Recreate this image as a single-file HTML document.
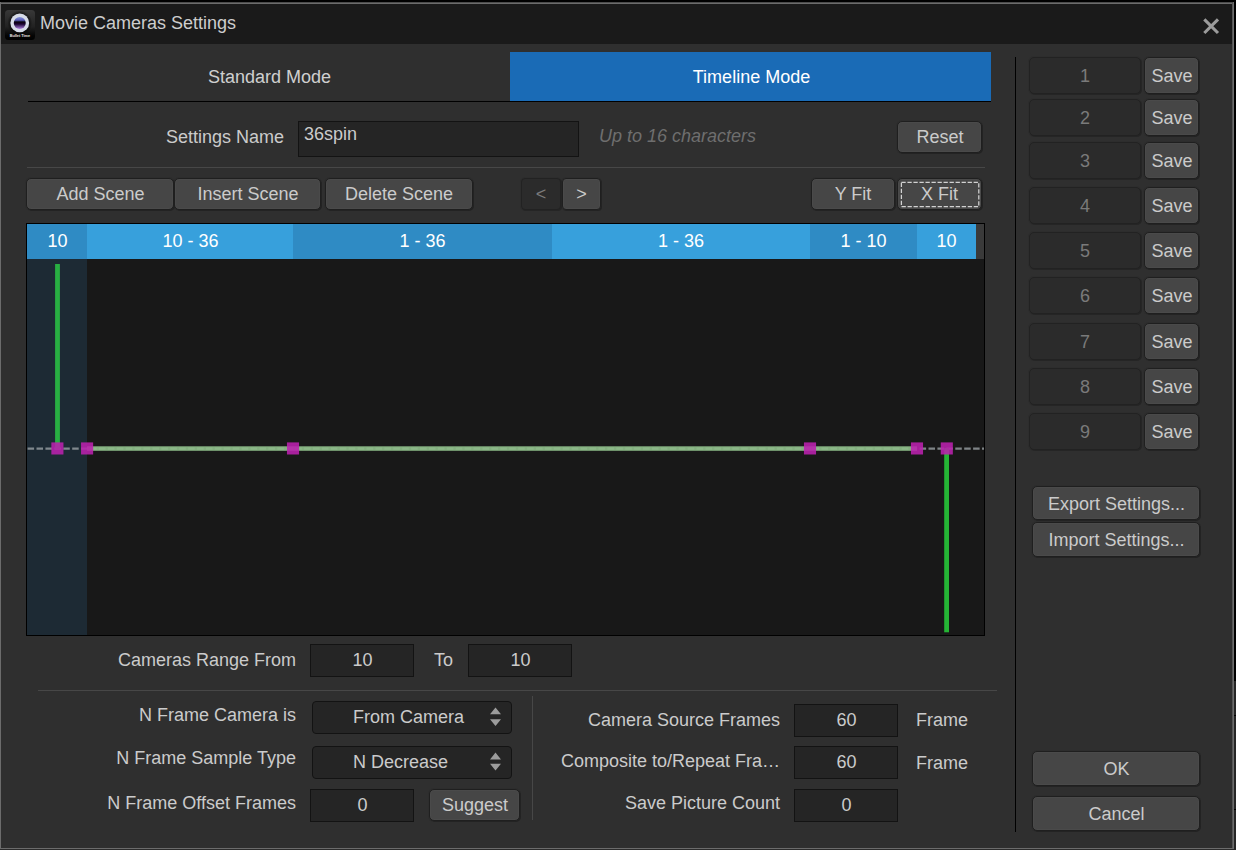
<!DOCTYPE html>
<html><head><meta charset="utf-8"><title>Movie Cameras Settings</title>
<style>
*{box-sizing:border-box;margin:0;padding:0}
html,body{width:1236px;height:850px;overflow:hidden;background:#000}
body{position:relative;font-family:"Liberation Sans",sans-serif;font-size:18px;color:#cbcbcb}
.a{position:absolute}
.t{position:absolute;white-space:nowrap;line-height:20px;height:20px}
.c{text-align:center}
.r{text-align:right}
.btn{position:absolute;background:#464646;border:1px solid #1f1f1f;border-radius:5px;text-align:center;color:#cbcbcb;box-shadow:1px 1px 0 0 rgba(32,32,32,.8),0 0 0 1px rgba(32,32,32,.15),inset 0 0 0 1px rgba(255,255,255,.025)}
.slot{position:absolute;background:#2b2b2b;border:1px solid #222;border-radius:5px;text-align:center;color:#7a7a7a;box-shadow:1px 1px 0 0 rgba(34,34,34,.7),0 0 0 1px rgba(32,32,32,.12)}
.inp{position:absolute;background:#252525;border:1px solid #131313;text-align:center;color:#cbcbcb;padding-left:1px}
.hl{position:absolute;height:1px;background:#474747}
.seg{position:absolute;top:224px;height:35px;color:#fff;text-align:center;line-height:34px}
.mk{position:absolute;width:12px;height:12px;background:rgba(187,33,174,.88);top:442.5px}
</style></head><body>
<!-- window frame -->
<div class="a" style="left:0;top:2px;width:1234px;height:847px;background:#6c6c6c"></div>
<div class="a" style="left:1px;top:2px;width:1232px;height:1px;background:#4c4c4c"></div>
<div class="a" style="left:1232px;top:3px;width:1px;height:845px;background:#565656"></div>
<div class="a" style="left:0;top:849px;width:1236px;height:1px;background:#2c2c2c"></div>
<div class="a" style="left:1234px;top:681px;width:2px;height:169px;background:#262626"></div>
<div class="a" style="left:1234px;top:715px;width:2px;height:1px;background:#000"></div>
<div class="a" style="left:1234px;top:809px;width:2px;height:1px;background:#000"></div>
<div class="a" style="left:1px;top:4px;width:1231px;height:40px;background:#1a1a1a"></div>
<div class="a" style="left:1px;top:44px;width:1231px;height:804px;background:#2f2f2f"></div>

<!-- title -->
<svg class="a" style="left:5px;top:10px" width="30" height="30" viewBox="0 0 30 30">
<defs>
<linearGradient id="ig" x1="0" y1="0" x2="0" y2="1"><stop offset="0" stop-color="#383838"/><stop offset="0.55" stop-color="#222"/><stop offset="0.85" stop-color="#050505"/><stop offset="1" stop-color="#000"/></linearGradient>
<linearGradient id="lg2" x1="0" y1="0" x2="0" y2="1"><stop offset="0" stop-color="#8796dc"/><stop offset="0.28" stop-color="#5a5cb6"/><stop offset="0.42" stop-color="#07020c"/><stop offset="0.6" stop-color="#1a0732"/><stop offset="1" stop-color="#ae7ee0"/></linearGradient>
<radialGradient id="sh" cx="0.5" cy="0.5" r="0.5"><stop offset="0.75" stop-color="#000" stop-opacity=".55"/><stop offset="1" stop-color="#000" stop-opacity="0"/></radialGradient>
<filter id="bl" x="-20%" y="-20%" width="140%" height="140%"><feGaussianBlur stdDeviation="0.45"/></filter>
</defs>
<rect x="0" y="0" width="30" height="30" rx="3.5" fill="url(#ig)"/>
<circle cx="14.75" cy="13" r="12.5" fill="url(#sh)"/>
<g filter="url(#bl)">
<circle cx="14.75" cy="12.9" r="9.4" fill="#d7dce8"/>
<circle cx="14.75" cy="12.9" r="6" fill="url(#lg2)"/>
</g>
<text x="14.9" y="26.9" textLength="20.4" lengthAdjust="spacingAndGlyphs" style="font-family:'Liberation Sans',sans-serif;font-size:4.3px;font-weight:bold" fill="#e6e6e6" text-anchor="middle">Bullet Time</text>
</svg>
<div class="t" style="left:40px;top:13px;color:#cdcdcd">Movie Cameras Settings</div>
<svg class="a" style="left:1201px;top:16px" width="20" height="20" viewBox="0 0 20 20"><path d="M3.3 3.3 L17 17 M17 3.3 L3.3 17" stroke="#9b9b9b" stroke-width="3.1" fill="none"/></svg>

<!-- tabs -->
<div class="a" style="left:510px;top:52px;width:481px;height:49px;background:#1a6bb6"></div>
<div class="a" style="left:28px;top:101px;width:963px;height:1px;background:#000"></div>
<div class="t c" style="left:28px;top:67px;width:483px;color:#cfcfcf">Standard Mode</div>
<div class="t c" style="left:511px;top:67px;width:481px;color:#fff">Timeline Mode</div>

<!-- settings name -->
<div class="t r" style="left:100px;top:127px;width:184px">Settings Name</div>
<div class="inp" style="left:298px;top:121px;width:281px;height:36px;text-align:left"><span class="t" style="left:5px;top:2px">36spin</span></div>
<div class="t" style="left:599px;top:126px;color:#6e6e6e;font-style:italic">Up to 16 characters</div>
<div class="btn" style="left:897px;top:121px;width:85px;height:32px;line-height:30px;padding-left:1px">Reset</div>
<div class="hl" style="left:27px;top:167px;width:958px"></div>

<!-- scene buttons -->
<div class="btn" style="left:26px;top:178px;width:148px;height:32px;line-height:30px;padding-left:1px">Add Scene</div>
<div class="btn" style="left:174px;top:178px;width:147px;height:32px;line-height:30px;padding-left:1px">Insert Scene</div>
<div class="btn" style="left:325px;top:178px;width:148px;height:32px;line-height:30px">Delete Scene</div>
<div class="slot" style="left:521px;top:178px;width:40px;height:32px;line-height:30px;border-radius:4px">&lt;</div>
<div class="btn" style="left:562px;top:178px;width:39px;height:32px;line-height:30px;border-radius:4px">&gt;</div>
<div class="btn" style="left:811px;top:178px;width:84px;height:32px;line-height:30px">Y Fit</div>
<div class="btn" style="left:897px;top:178px;width:85px;height:32px;line-height:30px">X Fit</div>
<svg class="a" style="left:897px;top:178px" width="86" height="33" viewBox="0 0 86 33"><rect x="4.4" y="4.4" width="77.4" height="24.2" fill="none" stroke="#d2d2d2" stroke-width="1.25" stroke-dasharray="4.3 1.72"/></svg>

<!-- timeline -->
<div class="a" style="left:26px;top:223px;width:959px;height:413px;background:#000"></div>
<div class="a" style="left:27px;top:224px;width:957px;height:411px;background:#181818"></div>
<div class="a" style="left:27px;top:259px;width:60px;height:376px;background:#1d2a34"></div>
<div class="seg" style="left:27px;width:60px;background:#2f8bc4;padding-left:1px">10</div>
<div class="seg" style="left:87px;width:206px;background:#37a0dc;padding-left:1px">10 - 36</div>
<div class="seg" style="left:293px;width:259px;background:#2f8bc4">1 - 36</div>
<div class="seg" style="left:552px;width:258px;background:#37a0dc">1 - 36</div>
<div class="seg" style="left:810px;width:107px;background:#2f8bc4">1 - 10</div>
<div class="seg" style="left:917px;width:59px;background:#37a0dc">10</div>
<div class="seg" style="left:976px;width:8px;background:#3a3a3a"></div>
<svg class="a" style="left:27px;top:259px" width="957" height="376" viewBox="27 259 957 376">
<line x1="27.6" y1="448.65" x2="984" y2="448.65" stroke="#9aa0a4" stroke-opacity=".8" stroke-width="2.2" stroke-dasharray="6.5 2.42"/>
<rect x="87" y="446.3" width="830" height="4.5" fill="#8cbb88" fill-opacity=".93"/>
<rect x="55.1" y="264" width="4.8" height="185" fill="#28ae42"/>
<rect x="944.2" y="448" width="4.8" height="184.3" fill="#25b435"/>
<rect x="51.35" y="442.4" width="12.1" height="12.1" fill="#bb21ae" fill-opacity=".88"/>
<rect x="81.05" y="442.4" width="12.1" height="12.1" fill="#bb21ae" fill-opacity=".88"/>
<rect x="286.95" y="442.4" width="12.1" height="12.1" fill="#bb21ae" fill-opacity=".88"/>
<rect x="803.95" y="442.4" width="12.1" height="12.1" fill="#bb21ae" fill-opacity=".88"/>
<rect x="910.95" y="442.4" width="12.1" height="12.1" fill="#bb21ae" fill-opacity=".88"/>
<rect x="940.75" y="442.4" width="12.1" height="12.1" fill="#bb21ae" fill-opacity=".88"/>
</svg>

<!-- cameras range -->
<div class="t r" style="left:60px;top:650px;width:236px">Cameras Range From</div>
<div class="inp" style="left:310px;top:644px;width:104px;height:33px;line-height:31px">10</div>
<div class="t" style="left:434px;top:650px">To</div>
<div class="inp" style="left:468px;top:644px;width:104px;height:33px;line-height:31px">10</div>
<div class="hl" style="left:38px;top:690px;width:959px"></div>

<!-- bottom left -->
<div class="t r" style="left:60px;top:705px;width:236px">N Frame Camera is</div>
<div class="t r" style="left:60px;top:748px;width:236px">N Frame Sample Type</div>
<div class="t r" style="left:60px;top:793px;width:236px">N Frame Offset Frames</div>
<div class="inp" style="left:312px;top:701px;width:200px;height:33px;border-radius:4px;line-height:31px;text-align:left;padding-left:40px">From Camera</div>
<div class="inp" style="left:312px;top:746px;width:200px;height:33px;border-radius:4px;line-height:31px;text-align:left;padding-left:40px">N Decrease</div>
<svg class="a" style="left:488px;top:705px" width="16" height="24" viewBox="0 0 16 24"><path d="M2 9.3 L7.5 2.5 L13 9.3 Z M2 14.2 L7.5 21 L13 14.2 Z" fill="#9c9c9c"/></svg>
<svg class="a" style="left:488px;top:750px" width="16" height="24" viewBox="0 0 16 24"><path d="M2 9.4 L7.5 2.6 L13 9.4 Z M2 13.8 L7.5 20.6 L13 13.8 Z" fill="#9c9c9c"/></svg>
<div class="inp" style="left:310px;top:789px;width:104px;height:33px;line-height:31px">0</div>
<div class="btn" style="left:429px;top:789px;width:91px;height:32px;line-height:31px;padding-left:1px">Suggest</div>
<div class="a" style="left:532px;top:696px;width:1px;height:124px;background:#474747"></div>

<!-- bottom right -->
<div class="t r" style="left:540px;top:710px;width:240px">Camera Source Frames</div>
<div class="t r" style="left:540px;top:751px;width:240px">Composite to/Repeat Fra…</div>
<div class="t r" style="left:540px;top:793px;width:240px">Save Picture Count</div>
<div class="inp" style="left:794px;top:704px;width:104px;height:33px;line-height:31px">60</div>
<div class="inp" style="left:794px;top:746px;width:104px;height:33px;line-height:31px">60</div>
<div class="inp" style="left:794px;top:789px;width:104px;height:33px;line-height:31px">0</div>
<div class="t" style="left:916px;top:710px">Frame</div>
<div class="t" style="left:916px;top:753px">Frame</div>

<!-- right column -->
<div class="a" style="left:1015px;top:57px;width:1px;height:775px;background:#000"></div>
<div class="slot" style="left:1029px;top:57px;width:112px;height:37px;line-height:37px">1</div>
<div class="btn" style="left:1144px;top:57px;width:55px;height:37px;line-height:37px;padding-left:1px">Save</div>
<div class="slot" style="left:1029px;top:99px;width:112px;height:37px;line-height:37px">2</div>
<div class="btn" style="left:1144px;top:99px;width:55px;height:37px;line-height:37px;padding-left:1px">Save</div>
<div class="slot" style="left:1029px;top:142px;width:112px;height:37px;line-height:37px">3</div>
<div class="btn" style="left:1144px;top:142px;width:55px;height:37px;line-height:37px;padding-left:1px">Save</div>
<div class="slot" style="left:1029px;top:187px;width:112px;height:37px;line-height:37px">4</div>
<div class="btn" style="left:1144px;top:187px;width:55px;height:37px;line-height:37px;padding-left:1px">Save</div>
<div class="slot" style="left:1029px;top:232px;width:112px;height:37px;line-height:37px">5</div>
<div class="btn" style="left:1144px;top:232px;width:55px;height:37px;line-height:37px;padding-left:1px">Save</div>
<div class="slot" style="left:1029px;top:277px;width:112px;height:37px;line-height:37px">6</div>
<div class="btn" style="left:1144px;top:277px;width:55px;height:37px;line-height:37px;padding-left:1px">Save</div>
<div class="slot" style="left:1029px;top:323px;width:112px;height:37px;line-height:37px">7</div>
<div class="btn" style="left:1144px;top:323px;width:55px;height:37px;line-height:37px;padding-left:1px">Save</div>
<div class="slot" style="left:1029px;top:368px;width:112px;height:37px;line-height:37px">8</div>
<div class="btn" style="left:1144px;top:368px;width:55px;height:37px;line-height:37px;padding-left:1px">Save</div>
<div class="slot" style="left:1029px;top:413px;width:112px;height:37px;line-height:37px">9</div>
<div class="btn" style="left:1144px;top:413px;width:55px;height:37px;line-height:37px;padding-left:1px">Save</div>
<div class="btn" style="left:1032px;top:486px;width:168px;height:34px;line-height:35px;padding-left:1px">Export Settings...</div>
<div class="btn" style="left:1032px;top:522px;width:168px;height:35px;line-height:35px;padding-left:1px">Import Settings...</div>
<div class="btn" style="left:1032px;top:751px;width:168px;height:35px;line-height:35px;padding-left:1px">OK</div>
<div class="btn" style="left:1032px;top:796px;width:168px;height:35px;line-height:35px;padding-left:1px">Cancel</div>
</body></html>
